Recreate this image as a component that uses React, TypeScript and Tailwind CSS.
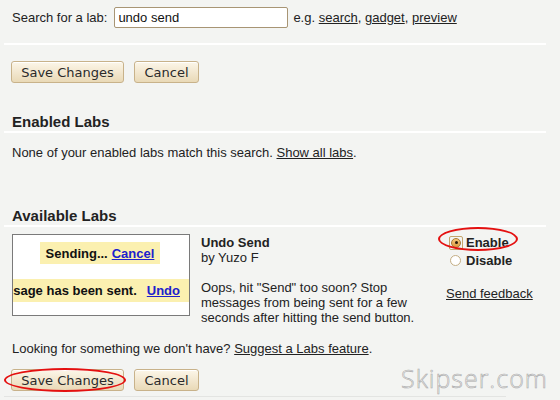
import React from 'react';

function Btn({ label, width }: { label: string; width: string }) {
  return (
    <button
      className={`${width} h-[22px] rounded-[3px] border border-[#c8b28a] bg-gradient-to-b from-[#fcf6e9] to-[#e9d9b7] text-[13px] text-[#2a2a2a] font-['DejaVu_Sans','Open_Sans',sans-serif] leading-none shadow-[inset_0_1px_0_#fff]`}
    >
      {label}
    </button>
  );
}

function Buttons() {
  return (
    <div className="flex gap-[10px] pl-[7px]">
      <Btn label="Save Changes" width="w-[113px]" />
      <Btn label="Cancel" width="w-[65px]" />
    </div>
  );
}

function Preview() {
  return (
    <div className="w-[178px] h-[82px] shrink-0 border border-[#7a7a7a] bg-white overflow-hidden font-['Liberation_Sans',Arial,sans-serif] font-bold text-[13px] text-[#111]">
      <div className="ml-[27px] mt-[7px] w-[120px] h-[22px] bg-[#fbf0b0] flex items-center justify-center gap-[4px]">
        <span>Sending...</span>
        <span className="text-[#2020cc] underline">Cancel</span>
      </div>
      <div className="mt-[15px] h-[23px] bg-[#fbf0b0] flex items-center justify-end pr-[9px] whitespace-nowrap">
        <span>Your message has been sent.</span>
        <span className="ml-[10px] text-[#2020cc] underline">Undo</span>
      </div>
    </div>
  );
}

export default function App() {
  return (
    <div className="relative w-[560px] h-[400px] overflow-hidden bg-[#f3f4f2] text-[13px] leading-[15px] text-[#222] font-['Liberation_Sans',Arial,sans-serif]">
      <div className="px-1">
        <div className="mt-[7px] px-2 flex items-center h-[21px]">
          <span>Search for a lab:</span>
          <div className="ml-[7px] w-[174px] h-[21px] border border-[#a89574] rounded-[2px] bg-white flex items-center pl-[3px] text-[#111]">
            undo send
          </div>
          <span className="ml-[5px]">
            e.g. <span className="underline">search</span>, <span className="underline">gadget</span>,{' '}
            <span className="underline">preview</span>
          </span>
        </div>

        <div className="mt-[15px] h-[2px] w-[542px] bg-white" />

        <div className="mt-[16px]">
          <Buttons />
        </div>

        <div className="mt-[30px] px-2 text-[15px] leading-[17px] font-bold">Enabled Labs</div>
        <div className="mt-[1px] h-[2px] w-[542px] bg-white" />

        <div className="mt-[12px] px-2">
          None of your enabled labs match this search. <span className="underline">Show all labs</span>.
        </div>

        <div className="mt-[47px] px-2 text-[15px] leading-[17px] font-bold">Available Labs</div>
        <div className="mt-[1px] h-[2px] w-[542px] bg-white" />

        <div className="mt-[7px] px-2 flex h-[82px]">
          <Preview />
          <div className="ml-[11px] w-[245px] pt-[1px]">
            <div className="font-bold">Undo Send</div>
            <div>by Yuzo F</div>
            <div className="mt-[15px] w-[225px]">
              Oops, hit "Send" too soon? Stop messages from being sent for a few seconds after hitting the send
              button.
            </div>
          </div>
          <div>
            <div className="flex items-center h-[17px] pl-[3px]">
              <span className="w-[14px] h-[14px] rounded-[2px] border border-[#c4a46c] flex items-center justify-center">
                <span className="w-[10px] h-[10px] rounded-full border border-[#a67836] bg-gradient-to-b from-[#f6c878] to-[#d99a40] flex items-center justify-center">
                  <span className="w-[3px] h-[3px] rounded-full bg-[#2a1a08]" />
                </span>
              </span>
              <span className="ml-[3px] font-bold">Enable</span>
            </div>
            <div className="flex items-center h-[19px] pl-[4px]">
              <span className="w-[11px] h-[11px] rounded-full border border-[#c4ae84] bg-white" />
              <span className="ml-[5px] font-bold">Disable</span>
            </div>
            <div className="mt-[16px] underline">Send feedback</div>
          </div>
        </div>

        <div className="mt-[25px] px-2">
          Looking for something we don't have? <span className="underline">Suggest a Labs feature</span>.
        </div>

        <div className="mt-[13px]">
          <Buttons />
        </div>

        <div className="mt-[5px] h-[1px] w-[502px] bg-[#e3e4e2]" />
      </div>

      <div className="absolute left-[438px] top-[227px] w-[80px] h-[24px] rounded-[50%] border-2 border-[#e41010]" />
      <div className="absolute left-[4px] top-[368px] w-[122px] h-[24px] rounded-[50%] border-2 border-[#e41010]" />

      <div className="absolute left-[401px] top-[361px] text-[25px] leading-[34px] tracking-[1px] font-light font-['Open_Sans',sans-serif] text-[#fbfbfb] [-webkit-text-stroke:0.6px_#a8a8a8]">
        Skipser.com
      </div>
    </div>
  );
}
